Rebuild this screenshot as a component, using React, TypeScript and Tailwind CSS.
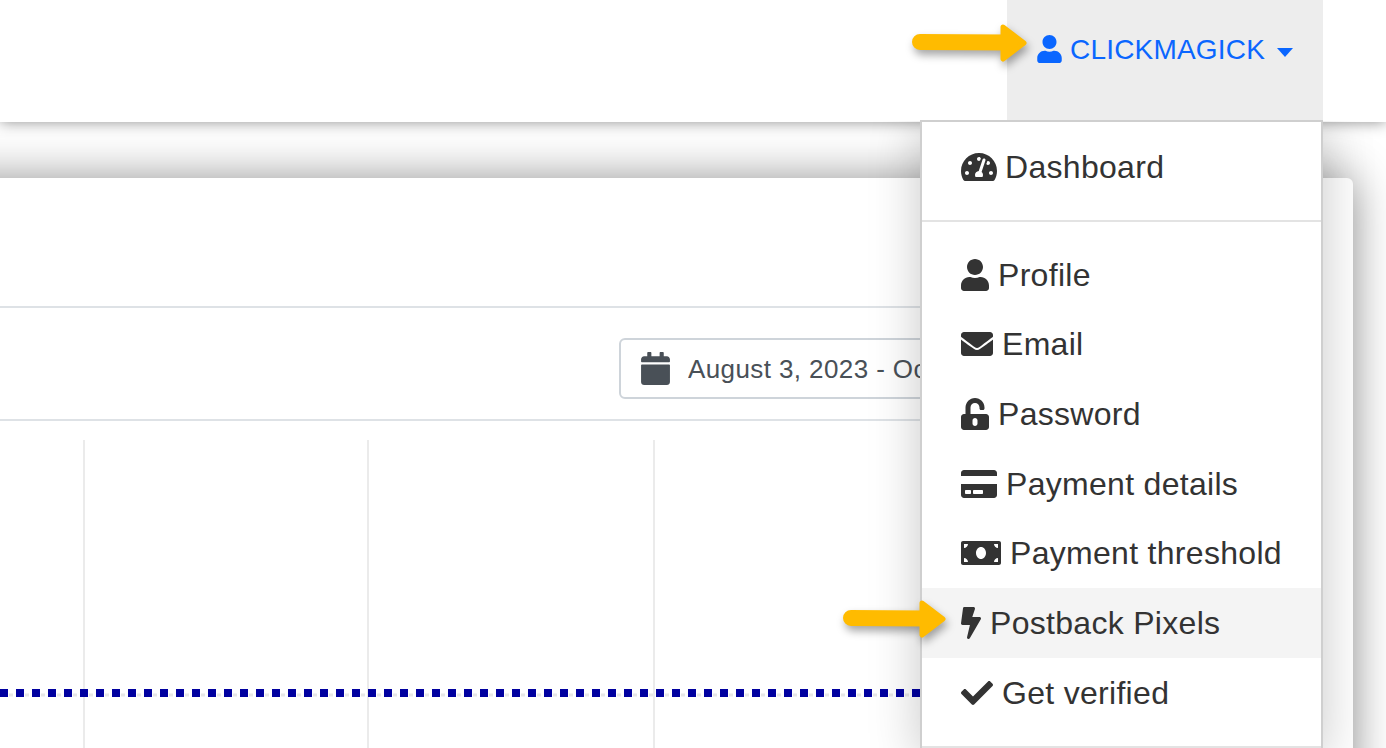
import React from 'react';
import {
  FaBolt,
  FaCalendar,
  FaCheck,
  FaCreditCard,
  FaEnvelope,
  FaMoneyBill,
  FaTachometerAlt,
  FaUnlockAlt,
  FaUser,
} from 'react-icons/fa';

const menuItems = [
  { label: 'Profile', icon: FaUser, size: 'w-[28px]' },
  { label: 'Email', icon: FaEnvelope, size: 'w-[32px]' },
  { label: 'Password', icon: FaUnlockAlt, size: 'w-[28px]' },
  { label: 'Payment details', icon: FaCreditCard, size: 'w-[36px]' },
  { label: 'Payment threshold', icon: FaMoneyBill, size: 'w-[40px]' },
  { label: 'Postback Pixels', icon: FaBolt, size: 'w-[20px]', active: true },
  { label: 'Get verified', icon: FaCheck, size: 'w-[32px]' },
];

const Arrow: React.FC<{ width: number; className: string }> = ({ width, className }) => (
  <svg
    width={width}
    height={38}
    viewBox={`0 0 ${width} 38`}
    className={`absolute z-30 drop-shadow-[2px_5px_4px_rgba(0,0,0,0.35)] ${className}`}
  >
    <line x1="8" y1="18" x2={width - 20} y2="18.5" stroke="#ffbb00" strokeWidth="16" strokeLinecap="round" />
    <polygon
      points={`${width - 24},3 ${width - 3},19 ${width - 24},35`}
      fill="#ffbb00"
      stroke="#ffbb00"
      strokeWidth="5"
      strokeLinejoin="round"
    />
  </svg>
);

const App: React.FC = () => {
  return (
    <div className="relative h-[748px] w-[1386px] overflow-hidden bg-white font-['Liberation_Sans',sans-serif]">
      <header className="relative z-10 flex h-[122px] justify-end bg-white pr-[63px] shadow-[0_0_14px_rgba(0,0,0,0.45)]">
        <div className="flex h-full w-[316px] items-start bg-[#ededed] pl-[30px] pt-[35px] text-[#0a66ff]">
          <FaUser className="h-[28px] w-[25px]" />
          <span className="ml-[8px] text-[28px] leading-[30px] tracking-[0.2px]">CLICKMAGICK</span>
          <span className="ml-[12px] mt-[13px] h-0 w-0 border-x-[8px] border-t-[9px] border-x-transparent border-t-[#0a66ff]" />
        </div>
      </header>

      <main className="pt-[56px]">
        <section className="-ml-[60px] mr-[33px] h-[700px] rounded-md bg-white pl-[60px] shadow-[0_0_46px_rgba(0,0,0,0.43)]">
          <div className="-ml-[60px] mr-[40px] h-[130px] border-b-2 border-[#dee2e6]" />
          <div className="-ml-[60px] mr-[40px] flex h-[113px] items-start border-b-2 border-[#dee2e6] pl-[679px] pt-[30px]">
            <button className="flex h-[61px] w-[640px] items-center rounded-md border-2 border-[#ced4da] pl-[20px] text-[#495057]">
              <FaCalendar className="h-[33px] w-[29px]" />
              <span className="ml-[18px] mt-[1px] w-[232px] overflow-hidden whitespace-nowrap text-left text-[26px] tracking-[0.4px]">August 3, 2023 - October 3, 2023</span>
            </button>
          </div>
          <svg width="1320" height="340" className="block">
            <line x1="84" y1="19" x2="84" y2="340" stroke="#ebebeb" strokeWidth="2" />
            <line x1="368" y1="19" x2="368" y2="340" stroke="#ebebeb" strokeWidth="2" />
            <line x1="654" y1="19" x2="654" y2="340" stroke="#ebebeb" strokeWidth="2" />
            <line x1="9" y1="274" x2="930" y2="274" stroke="#e6e6e6" strokeWidth="3" strokeDasharray="4 12" />
            <line x1="0" y1="272" x2="930" y2="272" stroke="#0000a0" strokeWidth="8" strokeDasharray="8 8" />
          </svg>
        </section>
      </main>

      {/* clips the menu's shadow so it stays off the header */}
      <div className="absolute inset-x-0 bottom-0 top-[121px] z-20 overflow-hidden">
        <nav className="ml-[920px] h-[640px] w-[403px] border-2 border-t-0 border-[#cfcfcf] bg-white pt-[11px] text-[32px] tracking-[0.3px] text-[#333333] shadow-[0_0_48px_rgba(0,0,0,0.22)]">
          <a className="flex h-[70px] items-center pl-[39px]">
            <FaTachometerAlt className="h-[32px] w-[36px]" />
            <span className="ml-[8px]">Dashboard</span>
          </a>
          <div className="my-[18px] h-[2px] bg-[#e3e3e3]" />
          {menuItems.map(item => {
            const Icon = item.icon;
            return (
              <a
                key={item.label}
                className={`flex h-[69.67px] items-center pl-[39px] ${item.active ? 'bg-[#f4f4f4]' : ''}`}
              >
                <Icon className={`h-[32px] ${item.size}`} />
                <span className="ml-[9px]">{item.label}</span>
              </a>
            );
          })}
          <div className="mt-[18px] h-[2px] bg-[#e3e3e3]" />
        </nav>
      </div>

      <div className="absolute left-[920px] top-[120px] z-20 h-[2px] w-[403px] bg-[#cfcfcf]" />

      <Arrow width={115} className="left-[912px] top-[24px]" />
      <Arrow width={103} className="left-[843px] top-[600px]" />
    </div>
  );
};

export default App;
